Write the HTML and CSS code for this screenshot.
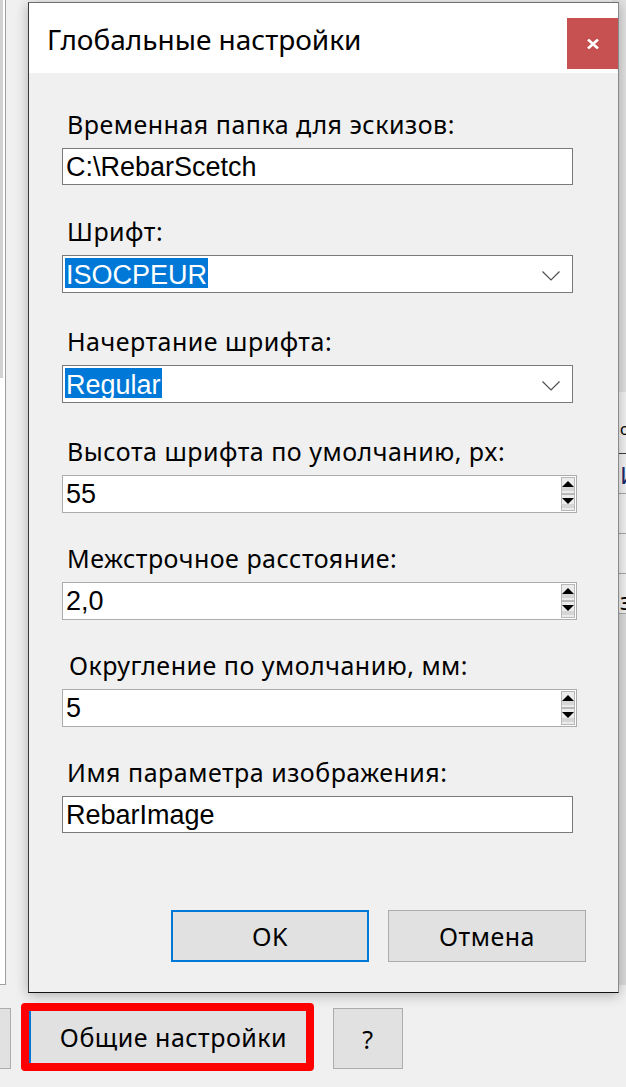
FILE: index.html
```html
<!DOCTYPE html>
<html lang="ru">
<head>
  <meta charset="UTF-8">
  <title>Глобальные настройки</title>
  <link rel="stylesheet" href="styles.css">
</head>
<body>
  <!-- Main window (behind the dialog) -->
  <div class="main-window">
    <div class="main-top">
      <div class="file-list">
        <div class="list-scroll"></div>
      </div>
      <div class="table-panel">
        <div class="tp-top"></div>
        <div class="tp-head"><span class="tp-text">о</span></div>
        <div class="tp-row"><span class="tp-text tp-accent">И</span></div>
        <div class="tp-row"></div>
        <div class="tp-row"></div>
        <div class="tp-row"><span class="tp-text tp-low">з</span></div>
        <div class="tp-rest"></div>
      </div>
    </div>
    <div class="main-bottom">
      <button class="main-btn main-btn-cut"></button>
      <div class="highlight">
        <button class="main-btn main-btn-focus">Общие настройки</button>
      </div>
      <button class="main-btn main-btn-help">?</button>
    </div>
  </div>

  <!-- Global settings dialog -->
  <div class="dialog">
    <div class="titlebar">
      <span class="title">Глобальные настройки</span>
      <button class="close-btn" aria-label="Закрыть">
        <svg width="12" height="10" viewBox="0 0 12 10"><path d="M1 0.5 L11 9.5 M11 0.5 L1 9.5" stroke="#fff" stroke-width="2.6"/></svg>
      </button>
    </div>

    <div class="dialog-body">
      <div class="field">
        <label class="field-label">Временная папка для эскизов:</label>
        <div class="textbox">C:\RebarScetch</div>
      </div>

      <div class="field field-combo">
        <label class="field-label">Шрифт:</label>
        <div class="combo">
          <span class="selected">ISOCPEUR</span>
          <svg class="combo-arrow" width="18" height="10" viewBox="0 0 18 10"><path d="M0.5 0.5 L9 9 L17.5 0.5" fill="none" stroke="#505050" stroke-width="1.2"/></svg>
        </div>
      </div>

      <div class="field field-combo">
        <label class="field-label">Начертание шрифта:</label>
        <div class="combo">
          <span class="selected">Regular</span>
          <svg class="combo-arrow" width="18" height="10" viewBox="0 0 18 10"><path d="M0.5 0.5 L9 9 L17.5 0.5" fill="none" stroke="#505050" stroke-width="1.2"/></svg>
        </div>
      </div>

      <div class="field field-numeric">
        <label class="field-label">Высота шрифта по умолчанию, px:</label>
        <div class="numeric">
          <span class="numeric-value">55</span>
          <div class="spin">
            <div class="spin-btn"><svg width="12" height="7" viewBox="0 0 12 7"><path d="M6 0 L12 6 L0 6 Z" fill="#000"/></svg></div>
            <div class="spin-btn"><svg width="12" height="7" viewBox="0 0 12 7"><path d="M0 0 L12 0 L6 6 Z" fill="#000"/></svg></div>
          </div>
        </div>
      </div>

      <div class="field field-numeric">
        <label class="field-label">Межстрочное расстояние:</label>
        <div class="numeric">
          <span class="numeric-value">2,0</span>
          <div class="spin">
            <div class="spin-btn"><svg width="12" height="7" viewBox="0 0 12 7"><path d="M6 0 L12 6 L0 6 Z" fill="#000"/></svg></div>
            <div class="spin-btn"><svg width="12" height="7" viewBox="0 0 12 7"><path d="M0 0 L12 0 L6 6 Z" fill="#000"/></svg></div>
          </div>
        </div>
      </div>

      <div class="field field-numeric">
        <label class="field-label field-label-shift">Округление по умолчанию, мм:</label>
        <div class="numeric">
          <span class="numeric-value">5</span>
          <div class="spin">
            <div class="spin-btn"><svg width="12" height="7" viewBox="0 0 12 7"><path d="M6 0 L12 6 L0 6 Z" fill="#000"/></svg></div>
            <div class="spin-btn"><svg width="12" height="7" viewBox="0 0 12 7"><path d="M0 0 L12 0 L6 6 Z" fill="#000"/></svg></div>
          </div>
        </div>
      </div>

      <div class="field">
        <label class="field-label">Имя параметра изображения:</label>
        <div class="textbox">RebarImage</div>
      </div>

      <div class="dialog-buttons">
        <button class="btn btn-default">OK</button>
        <button class="btn">Отмена</button>
      </div>
    </div>
  </div>
</body>
</html>
```

FILE: styles.css
```css
* { box-sizing: border-box; }
html, body { margin: 0; }
body { font-family: "Noto Sans", "Open Sans", sans-serif; background: #f0f0f0; color: #000; width: 626px; height: 1087px; overflow: hidden; position: relative; }
button { font-family: inherit; cursor: pointer; }

/* main window behind */
.main-window { position: absolute; left: 0; top: 0; width: 626px; height: 1087px; display: flex; flex-direction: column; }
.main-top { height: 985px; display: flex; }
.file-list { width: 6px; height: 985px; background: #fff; border-right: 1px solid #a0a0a0; border-bottom: 1px solid #a0a0a0; }
.list-scroll { width: 3px; height: 378px; background: #d2d2d2; }

.table-panel { margin-left: auto; width: 14px; display: flex; flex-direction: column; overflow: hidden; }
.tp-top { height: 392px; background: #e2e2e2; }
.tp-head { height: 62px; background: #f3f3f3; border-bottom: 1px solid #3c3c3c; }
.tp-row { height: 40px; background: #f3f3f3; border-bottom: 1px solid #a8a8a8; }
.tp-rest { flex: 1; background: #dcdcdc; }
.tp-text { display: block; padding-left: 8px; font-size: 24px; line-height: 30px; white-space: nowrap; }
.tp-head .tp-text { padding-top: 22px; font-size: 16px; }
.tp-accent { color: #1b2a6b; padding-top: 6px; }
.tp-low { padding-top: 12px; }

.main-bottom { display: flex; align-items: flex-start; }
.main-btn { height: 61px; margin-top: 23px; background: #e1e1e1; border: 1px solid #adadad; font-size: 25px; letter-spacing: 0.5px; color: #000; padding: 0; }
.main-btn-cut { width: 71px; margin-left: -60px; }
.highlight { margin-left: 10px; margin-top: 18px; width: 293px; height: 68px; border: 8px solid #ff0000; border-radius: 4px; display: flex; }
.main-btn-focus { margin: 0; width: 100%; height: 100%; border: none; border-left: 2px solid #0078d7; padding-left: 10px; }
.main-btn-help { width: 70px; margin-left: 19px; }

/* dialog */
.dialog { position: absolute; left: 28px; top: 2px; width: 591px; height: 991px; background: #f0f0f0; border: 1px solid #6f6f6f; border-left-color: #3a3a3a; border-bottom-color: #111; border-right-color: #8a8a8a; box-shadow: 0 2px 12px rgba(0,0,0,0.28); display: flex; flex-direction: column; }

.titlebar { height: 70px; background: #fff; display: flex; align-items: flex-start; }
.title { margin-top: 16px; padding-left: 18px; font-size: 28px; line-height: 40px; }
.close-btn { margin-left: auto; margin-top: 15px; width: 51px; height: 51px; background: #c75050; border: none; display: flex; align-items: center; justify-content: center; padding: 0; }

.dialog-body { flex: 1; padding: 36px 0 0 33px; display: flex; flex-direction: column; }

.field { display: flex; flex-direction: column; }
.field + .field { margin-top: 31px; }
.field-combo + .field { margin-top: 33px; }
.field-numeric + .field { margin-top: 30px; }
.field-label { display: block; height: 30px; line-height: 30px; margin: 0 0 9px 5px; font-size: 25px; letter-spacing: 0.5px; white-space: nowrap; }
.field-label-shift { margin-left: 7px; }

.textbox { width: 511px; height: 37px; border: 1px solid #7a7a7a; background: #fff; padding: 0 3px; font-family: "Liberation Sans", Arial, sans-serif; font-size: 27px; line-height: 36px; white-space: nowrap; }

.combo { width: 511px; height: 38px; border: 1px solid #7a7a7a; background: #fff; display: flex; align-items: flex-start; padding: 2px 0 0 2px; }
.selected { background: #0078d7; color: #fff; height: 30px; padding: 4px 1px 0 1px; font-family: "Liberation Sans", Arial, sans-serif; font-size: 27px; line-height: 26px; }
.combo-arrow { margin: 13px 12px 0 auto; }

.numeric { width: 515px; height: 38px; border: 1px solid #acacac; background: #fff; display: flex; }
.numeric-value { flex: 1; padding-left: 3px; font-family: "Liberation Sans", Arial, sans-serif; font-size: 27px; line-height: 36px; }
.spin { width: 14px; margin: 1px 1px 1px 0; display: flex; flex-direction: column; }
.spin-btn { flex: 1; border: 1px solid #b8b8b8; background: linear-gradient(#ececec 0 62%, #d6d6d6 62% 86%, #ececec 86%); display: flex; justify-content: center; padding-top: 3px; }
.spin-btn svg { display: block; }

.dialog-buttons { display: flex; justify-content: flex-end; gap: 19px; margin-top: 77px; padding-right: 32px; }
.btn { width: 198px; height: 52px; background: #e1e1e1; border: 1px solid #adadad; font-size: 25px; letter-spacing: 0.5px; color: #000; padding: 0; }
.btn-default { border: 2px solid #0078d7; }
```
